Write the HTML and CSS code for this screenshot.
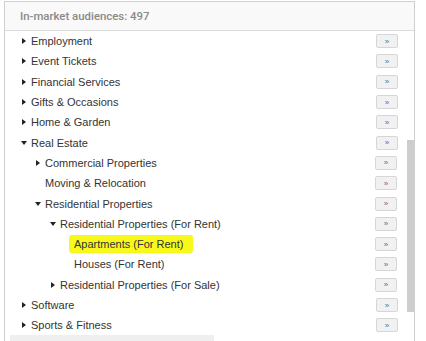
FILE: index.html
```html
<!DOCTYPE html>
<html lang="en">
<head>
  <meta charset="UTF-8">
  <title>In-market audiences</title>
  <link rel="stylesheet" href="styles.css">
</head>
<body>
  <div class="panel">
    <div class="panel-head">In-market audiences: 497</div>
    <div class="list">
      <div class="row lvl0"><span class="toggle closed"></span><span class="label">Employment</span><button class="add">&raquo;</button></div>
      <div class="row lvl0"><span class="toggle closed"></span><span class="label">Event Tickets</span><button class="add">&raquo;</button></div>
      <div class="row lvl0"><span class="toggle closed"></span><span class="label">Financial Services</span><button class="add">&raquo;</button></div>
      <div class="row lvl0"><span class="toggle closed"></span><span class="label">Gifts &amp; Occasions</span><button class="add">&raquo;</button></div>
      <div class="row lvl0"><span class="toggle closed"></span><span class="label">Home &amp; Garden</span><button class="add">&raquo;</button></div>
      <div class="row lvl0"><span class="toggle open"></span><span class="label">Real Estate</span><button class="add">&raquo;</button></div>
      <div class="children">
        <div class="row lvl1"><span class="toggle closed"></span><span class="label">Commercial Properties</span><button class="add">&raquo;</button></div>
        <div class="row lvl1"><span class="toggle"></span><span class="label">Moving &amp; Relocation</span><button class="add">&raquo;</button></div>
        <div class="row lvl1"><span class="toggle open"></span><span class="label">Residential Properties</span><button class="add">&raquo;</button></div>
        <div class="row lvl2"><span class="toggle open"></span><span class="label">Residential Properties (For Rent)</span><button class="add">&raquo;</button></div>
        <div class="row lvl3"><span class="toggle"></span><span class="label marked">Apartments (For Rent)</span><button class="add">&raquo;</button></div>
        <div class="row lvl3"><span class="toggle"></span><span class="label">Houses (For Rent)</span><button class="add">&raquo;</button></div>
        <div class="row lvl2"><span class="toggle closed"></span><span class="label">Residential Properties (For Sale)</span><button class="add">&raquo;</button></div>
      </div>
      <div class="row lvl0"><span class="toggle closed"></span><span class="label">Software</span><button class="add">&raquo;</button></div>
      <div class="row lvl0"><span class="toggle closed"></span><span class="label">Sports &amp; Fitness</span><button class="add">&raquo;</button></div>
      <div class="scroll-thumb"></div>
    </div>
    <div class="hscroll"></div>
  </div>
</body>
</html>
```

FILE: styles.css
```css
body {
  margin: 0;
  background: #fff;
  font-family: "Liberation Sans", Arial, sans-serif;
  font-size: 11px;
  color: #333;
}

.panel {
  margin: 1px 0 0 4px;
  width: 411px;
  box-sizing: border-box;
  border: 1px solid #cfcfcf;
  border-bottom: none;
}

.panel-head {
  height: 28px;
  line-height: 28px;
  padding-left: 15px;
  background: #f9f9f9;
  border-bottom: 1px solid #dcdcdc;
  font-family: Roboto, "Liberation Sans", sans-serif;
  font-weight: 500;
  font-size: 11.4px;
  color: #8a8a8a;
}

.list {
  position: relative;
}

.row {
  display: flex;
  align-items: center;
  height: 20.3px;
  padding-right: 16px;
}

.lvl0 { padding-left: 17px; }
.lvl1 { padding-left: 31px; }
.lvl2 { padding-left: 46px; }
.lvl3 { padding-left: 60px; }

.children .row {
  padding-right: 17px;
}

.toggle {
  width: 9px;
  height: 6px;
  position: relative;
  flex: none;
}

.toggle.closed::before {
  content: "";
  position: absolute;
  left: 0;
  top: 0;
  border-left: 4px solid #222;
  border-top: 3px solid transparent;
  border-bottom: 3px solid transparent;
}

.toggle.open::before {
  content: "";
  position: absolute;
  left: -1px;
  top: 1px;
  border-top: 4px solid #222;
  border-left: 3px solid transparent;
  border-right: 3px solid transparent;
}

.label {
  white-space: nowrap;
}

.label.marked {
  display: inline-block;
  height: 18px;
  line-height: 18px;
  margin-left: -5px;
  padding: 0 10px 0 5px;
  background: #f8f81a;
  border-radius: 3px;
}

.add {
  margin-left: auto;
  width: 22px;
  height: 14px;
  padding: 0;
  background: #f1f1f1;
  border: 1px solid #d6d6d6;
  border-radius: 2px;
  font-family: "Liberation Sans", Arial, sans-serif;
  font-size: 8px;
  line-height: 11px;
  color: #5a6a9a;
}

.scroll-thumb {
  position: absolute;
  right: 0;
  top: 109px;
  width: 7px;
  height: 172px;
  background: #cdcdcd;
}

.hscroll {
  margin-left: 5px;
  width: 204px;
  height: 6px;
  background: #efefef;
}
```
